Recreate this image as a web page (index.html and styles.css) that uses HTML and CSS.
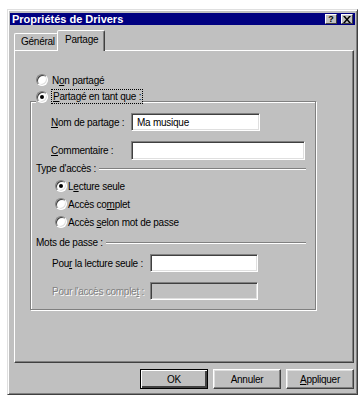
FILE: index.html
```html
<!DOCTYPE html>
<html lang="fr">
<head>
<meta charset="utf-8">
<title>Propriétés de Drivers</title>
<link rel="stylesheet" href="styles.css">
</head>
<body>
<div class="window">
  <div class="titlebar">
    <span class="title">Propriétés de Drivers</span>
    <div class="caption-btns">
      <span class="cbtn">?</span>
      <span class="cbtn cbtn-x">
        <svg width="8" height="7" viewBox="0 0 8 7"><path d="M0 0h2l2 2.5L6 0h2L5 3.5 8 7H6L4 4.5 2 7H0l3-3.5z" fill="#000"/></svg>
      </span>
    </div>
  </div>

  <div class="tabs">
    <div class="tab">Général</div>
    <div class="tab tab-active">Partage</div>
  </div>

  <div class="panel">
    <div class="radio-row top-radio"><span class="radio"></span><span>N<u>o</u>n partagé</span></div>

    <fieldset class="group">
      <legend class="legend"><span class="radio checked"></span><span class="focus"><u>P</u>artagé en tant que :</span></legend>

      <div class="field-row row-nom">
        <span class="label"><u>N</u>om de partage :</span>
        <span class="input input-nom">Ma musique</span>
      </div>
      <div class="field-row row-com">
        <span class="label"><u>C</u>ommentaire :</span>
        <span class="input input-com"></span>
      </div>

      <div class="section"><span>Type d'accès :</span><span class="etch"></span></div>
      <div class="radio-row sub-radio r1"><span class="radio checked"></span><span>L<u>e</u>cture seule</span></div>
      <div class="radio-row sub-radio"><span class="radio"></span><span>Accès co<u>m</u>plet</span></div>
      <div class="radio-row sub-radio"><span class="radio"></span><span>Accès <u>s</u>elon mot de passe</span></div>

      <div class="section sec2"><span>Mots de passe :</span><span class="etch"></span></div>
      <div class="field-row pw-row pw1">
        <span class="label label-pw">Pou<u>r</u> la lecture seule :</span>
        <span class="input input-pw"></span>
      </div>
      <div class="field-row pw-row pw2">
        <span class="label label-pw disabled">Pour l'accès comple<u>t</u> :</span>
        <span class="input input-pw input-disabled"></span>
      </div>
    </fieldset>
  </div>

  <div class="buttons">
    <button class="btn btn-default">OK</button>
    <button class="btn">Annuler</button>
    <button class="btn"><u>A</u>ppliquer</button>
  </div>
</div>
</body>
</html>
```
FILE: styles.css
```css
* { box-sizing: border-box; }
html, body { margin: 0; padding: 0; background: #fff; }
body {
  font-family: "Liberation Sans", Arial, sans-serif;
  font-size: 10px;
  letter-spacing: -0.25px;
  color: #000;
}
u { text-decoration: underline; text-underline-offset: 1px; }

.window {
  margin: 9px 0 0 7px;
  width: 351px;
  height: 386px;
  background: #c0c0c0;
  border: 1px solid;
  border-color: #dfdfdf #404040 #404040 #dfdfdf;
  box-shadow: inset 1px 1px #fff, inset -1px -1px #808080;
  padding: 3px 2px 2px 2px;
  display: flex;
  flex-direction: column;
}

.titlebar {
  height: 12px;
  background: #000080;
  color: #fff;
  display: flex;
  align-items: center;
  justify-content: space-between;
  padding: 0 2px 0 2px;
}
.title { font-weight: bold; font-size: 11px; letter-spacing: 0; }
.caption-btns { display: flex; gap: 4px; }
.cbtn {
  width: 12px; height: 10px;
  background: #c0c0c0;
  border: 1px solid;
  border-color: #fff #404040 #404040 #fff;
  color: #000;
  font-weight: bold;
  font-size: 9px;
  line-height: 8px;
  letter-spacing: 0;
  display: flex; align-items: center; justify-content: center;
}

.tabs {
  display: flex;
  align-items: flex-end;
  margin-top: 5px;
  padding-left: 4px;
  height: 20px;
}
.tab {
  height: 17px;
  padding: 0 4px 0 6px;
  border: 1px solid;
  border-bottom: none;
  border-color: #fff #404040 transparent #fff;
  border-radius: 2px 2px 0 0;
  display: flex; align-items: center;
  line-height: 12px;
  width: 44px;
}
.tab-active {
  height: 21px;
  width: 48px;
  margin-bottom: -1px;
  margin-left: -1px;
  position: relative;
  z-index: 1;
  background: #c0c0c0;
  padding-left: 7px;
  padding-bottom: 2px;
  box-shadow: inset -1px 0 #808080;
}

.panel {
  margin-left: 4px;
  width: 340px;
  height: 313px;
  border: 1px solid;
  border-color: #fff #404040 #404040 #fff;
  box-shadow: inset -1px -1px #808080;
  padding: 22px 0 0 15px;
  display: flex;
  flex-direction: column;
}

.radio-row { display: flex; align-items: center; height: 14px; gap: 4px; }
.top-radio { padding-left: 6px; }

.radio {
  width: 12px; height: 12px;
  border-radius: 50%;
  background: #fff;
  border: 1px solid;
  border-color: #808080 #fff #fff #808080;
  box-shadow: inset 1px 1px #404040, inset -1px -1px #dfdfdf;
  flex: none;
  display: flex; align-items: center; justify-content: center;
}
.radio.checked::after {
  content: "";
  width: 4px; height: 4px;
  border-radius: 50%;
  background: #000;
}

.group {
  margin: 3px 0 0 0;
  width: 286px;
  min-width: 0;
  border: 1px solid #808080;
  box-shadow: inset 1px 1px #fff, 1px 1px #fff;
  padding: 0 9px 9px 5px;
  display: flex;
  flex-direction: column;
}
.legend {
  display: flex;
  align-items: flex-start;
  gap: 4px;
  padding: 0 1px 8px 0;
  margin-left: 0;
  height: 22px;
  line-height: 13px;
  background: #c0c0c0;
}
.legend .radio { margin-top: 1px; }
.focus { outline: 1px dotted #000; outline-offset: 0; padding: 0 1px; }

.field-row { display: flex; align-items: center; }
.label { padding-left: 15px; width: 95px; flex: none; }
.input {
  height: 18px;
  background: #fff;
  border: 1px solid;
  border-color: #808080 #fff #fff #808080;
  box-shadow: inset 1px 1px #404040, inset -1px -1px #dfdfdf;
  display: flex; align-items: center;
  padding-left: 5px;
}
.row-nom { margin-top: 1px; }
.input-nom { width: 129px; }
.row-com { margin-top: 10px; }
.input-com { width: 174px; height: 19px; }

.section { display: flex; align-items: center; gap: 3px; height: 14px; margin-top: 1px; }
.etch { flex: 1; height: 2px; border-top: 1px solid #808080; border-bottom: 1px solid #fff; margin-top: 1px; }
.sec2 { margin-top: 6px; }

.sub-radio { padding-left: 19px; margin-top: 4px; gap: 1px; }
.r1 { margin-top: 4px; }

.pw-row .label-pw { padding-left: 16px; width: 114px; }
.input-pw { width: 108px; }
.pw1 { margin-top: 5px; }
.pw2 { margin-top: 10px; }
.disabled { color: #808080; text-shadow: 1px 1px #fff; }
.input-disabled { background: #c0c0c0; }

.buttons {
  display: flex;
  justify-content: flex-end;
  gap: 5px;
  margin-top: 6px;
  padding-right: 1px;
}
.btn {
  font-family: "Liberation Sans", Arial, sans-serif;
  font-size: 10px;
  letter-spacing: -0.25px;
  color: #000;
  width: 68px; height: 20px;
  background: #c0c0c0;
  border: 1px solid;
  border-color: #fff #404040 #404040 #fff;
  box-shadow: inset -1px -1px #808080, inset 1px 1px #dfdfdf;
  padding: 0;
  margin: 0;
}
.btn-default {
  border-color: #000;
  box-shadow: inset 1px 1px #fff, inset -2px -2px #404040, inset -1px -1px #808080;
}
```
